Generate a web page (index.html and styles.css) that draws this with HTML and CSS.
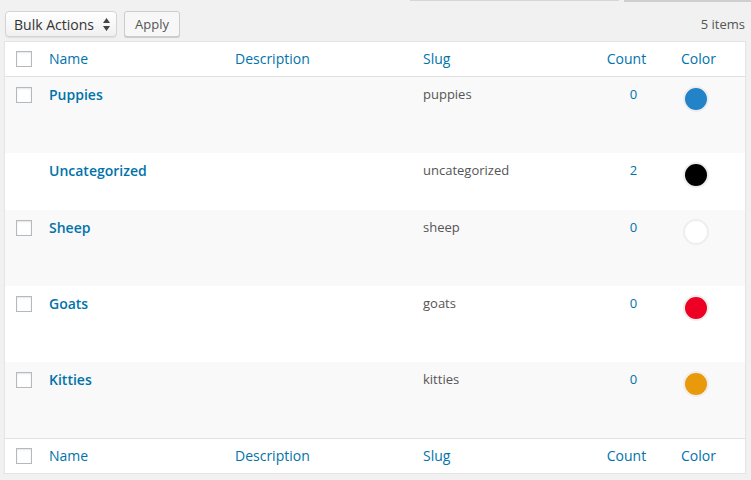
FILE: index.html
```html
<!DOCTYPE html>
<html>
<head>
<meta charset="utf-8">
<link rel="stylesheet" href="styles.css">
</head>
<body>
<div class="topbar"><span class="search-edge"></span><span class="btn-edge"></span></div>
<div class="tablenav">
  <div class="select">Bulk Actions
    <svg class="arrows" width="7" height="13" viewBox="0 0 7 13"><path d="M3.5 0 L7 5 L0 5 Z M3.5 13 L7 8 L0 8 Z" fill="#444"/></svg>
  </div>
  <div class="apply">Apply</div>
  <div class="count-items">5 items</div>
</div>
<table class="list">
  <colgroup>
    <col class="c-check"><col class="c-name"><col class="c-desc"><col class="c-slug"><col class="c-count"><col class="c-color">
  </colgroup>
  <thead>
    <tr>
      <th class="check"><span class="cb"></span></th>
      <th><a>Name</a></th>
      <th><a>Description</a></th>
      <th><a>Slug</a></th>
      <th class="num"><a>Count</a></th>
      <th><a>Color</a></th>
    </tr>
  </thead>
  <tbody>
    <tr class="tall alt">
      <td class="check"><span class="cb"></span></td>
      <td><a class="name">Puppies</a></td>
      <td></td>
      <td class="slug">puppies</td>
      <td class="num"><a>0</a></td>
      <td><span class="dot blue"></span></td>
    </tr>
    <tr class="short">
      <td class="check"></td>
      <td><a class="name">Uncategorized</a></td>
      <td></td>
      <td class="slug">uncategorized</td>
      <td class="num"><a>2</a></td>
      <td><span class="dot black"></span></td>
    </tr>
    <tr class="tall alt">
      <td class="check"><span class="cb"></span></td>
      <td><a class="name">Sheep</a></td>
      <td></td>
      <td class="slug">sheep</td>
      <td class="num"><a>0</a></td>
      <td><span class="dot white"></span></td>
    </tr>
    <tr class="tall">
      <td class="check"><span class="cb"></span></td>
      <td><a class="name">Goats</a></td>
      <td></td>
      <td class="slug">goats</td>
      <td class="num"><a>0</a></td>
      <td><span class="dot red"></span></td>
    </tr>
    <tr class="tall alt">
      <td class="check"><span class="cb"></span></td>
      <td><a class="name">Kitties</a></td>
      <td></td>
      <td class="slug">kitties</td>
      <td class="num"><a>0</a></td>
      <td><span class="dot orange"></span></td>
    </tr>
  </tbody>
  <tfoot>
    <tr>
      <th class="check"><span class="cb"></span></th>
      <th><a>Name</a></th>
      <th><a>Description</a></th>
      <th><a>Slug</a></th>
      <th class="num"><a>Count</a></th>
      <th><a>Color</a></th>
    </tr>
  </tfoot>
</table>
</body>
</html>
```

FILE: styles.css
```css
html, body {
  margin: 0;
  padding: 0;
  background: #f1f1f1;
  font-family: "Open Sans", "Liberation Sans", sans-serif;
  color: #444;
  font-size: 13px;
}

.topbar {
  display: flex;
  align-items: flex-start;
  height: 2px;
  padding-left: 410px;
  gap: 5px;
}
.search-edge {
  width: 209px;
  height: 1px;
  background: #d6d6d6;
}
.btn-edge {
  flex: 1;
  height: 2px;
  background: #cfcfcf;
}

.tablenav {
  display: flex;
  align-items: center;
  height: 26px;
  margin-top: 9px;
  padding: 0 6px 0 5px;
}

.select {
  box-sizing: border-box;
  width: 112px;
  height: 26px;
  display: flex;
  align-items: center;
  padding-left: 8px;
  font-size: 14px;
  color: #333;
  background: linear-gradient(#ffffff, #f0f0f0);
  border: 1px solid #d4d4d4;
  border-radius: 4px;
  box-shadow: 0 1px 1px rgba(0,0,0,0.08);
  position: relative;
}
.arrows {
  position: absolute;
  right: 6px;
  top: 6px;
}

.apply {
  box-sizing: border-box;
  margin-left: 7px;
  width: 56px;
  height: 26px;
  display: flex;
  align-items: center;
  justify-content: center;
  font-size: 13px;
  color: #555;
  background: #f7f7f7;
  border: 1px solid #cccccc;
  border-radius: 3px;
  box-shadow: 0 1px 0 #ccc;
}

.count-items {
  margin-left: auto;
  color: #555;
  font-size: 13px;
}

.list {
  margin: 4px 0 0 4px;
  width: 742px;
  table-layout: fixed;
  border-spacing: 0;
  background: #fff;
  border: 1px solid #e5e5e5;
  box-shadow: 0 1px 1px rgba(0,0,0,0.04);
}
.c-check { width: 34px; }
.c-name { width: 186px; }
.c-desc { width: 188px; }
.c-slug { width: 170px; }
.c-count { width: 88px; }
.c-color { width: 74px; }

th, td {
  text-align: left;
  vertical-align: top;
  padding: 8px 10px;
  line-height: 19.6px;
}
th {
  font-weight: 400;
  font-size: 14px;
  padding: 7px 10px;
  line-height: 20px;
}
th a, td a {
  color: #0073aa;
  text-decoration: none;
}
thead th {
  border-bottom: 1px solid #e1e1e1;
}
tfoot th {
  border-top: 1px solid #e1e1e1;
}

th.check {
  padding: 9px 0 0 11px;
}
td.check {
  padding: 10px 0 0 11px;
}
.cb {
  display: block;
  box-sizing: border-box;
  width: 16px;
  height: 16px;
  border: 1px solid #b4b9be;
  background: #fff;
  box-shadow: inset 0 1px 2px rgba(0,0,0,0.1);
}

tr.tall { height: 76px; }
tr.short { height: 57px; }
tr.alt td { background: #f9f9f9; }

.name {
  font-size: 14px;
  font-weight: 600;
}
.slug {
  color: #555;
  font-size: 13px;
}
.num {
  text-align: center;
}
th.num {
  padding-right: 11px;
}
td.num {
  padding-left: 23px;
}
td.num a {
  font-size: 13px;
}

.dot {
  display: block;
  box-sizing: border-box;
  width: 26px;
  height: 26px;
  margin: 1px 0 0 2px;
  border-radius: 50%;
  border: 2px solid #eeeeee;
}
.blue { background: #2383c8; }
.black { background: #000; }
.white { background: #fff; }
.red { background: #ee0024; }
.orange { background: #e99a0a; }
```
